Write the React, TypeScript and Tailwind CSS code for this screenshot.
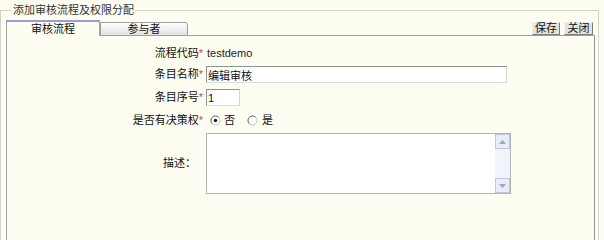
import React from "react";

function Radio({ checked }: { checked?: boolean }) {
  return (
    <svg width="11" height="11" viewBox="0 0 11 11" className="shrink-0">
      <circle cx="5.5" cy="5.5" r="4.5" fill="#ffffff" stroke="#c4c4c4" strokeWidth="1" />
      <path d="M2.3 8.7 A4.5 4.5 0 0 1 8.7 2.3" stroke="#6e6e6e" strokeWidth="1" fill="none" />
      {checked && <circle cx="5.5" cy="5.5" r="1.7" fill="#1a1a1a" />}
    </svg>
  );
}

function Star() {
  return <span className="text-[#e23b3b]">*</span>;
}

function Label({ text, star = true }: { text: string; star?: boolean }) {
  return (
    <div className={`w-[196px] shrink-0 text-right ${star ? "" : "pr-[7px]"}`}>
      {text}
      {star && <Star />}
    </div>
  );
}

const inputCls =
  "h-[17px] bg-white border border-t-[#8a968c] border-l-[#8a968c] border-r-[#d4d6d4] border-b-[#dcdcdc] px-[1px] text-[11px] text-[#111] outline-none leading-[15px]";

export default function App() {
  return (
    <div className="w-[604px] h-[240px] overflow-hidden bg-[#fdfdf1] text-[11px] text-[#111] [font-family:'Liberation_Sans','Noto_Sans_CJK_SC',sans-serif]">
      <fieldset className="mt-[2px] w-[599px] h-[300px] border border-[#d2d2c6] pl-[5px] pr-[3px] pt-[2px]">
        <legend className="ml-[6px] px-[1px] leading-[16px] text-[#333]">添加审核流程及权限分配</legend>
        <div className="flex flex-col">
          {/* tab row */}
          <div className="flex h-[16px] items-end">
            <div className="w-[94px] h-[16px] shrink-0 border-l border-r border-t-2 border-l-[#a4a4a4] border-r-[#a4a4a4] border-t-[#9c9cd4] bg-[#fdfdf1] flex items-center justify-center leading-[14px] text-[#111]">
              审核流程
            </div>
            <div className="w-[88px] h-[14px] shrink-0 border border-[#a0a0a0] rounded-tr-[3px] bg-gradient-to-b from-[#ffffff] to-[#e2e2e2] flex items-center justify-center leading-[12px] text-[#111]">
              参与者
            </div>
            <div className="flex-1 h-[14px] border-b border-[#a0a0a0] flex justify-end items-start gap-[4px] pr-[2px]">
              <button className="w-[28px] h-[13px] border border-t-[#f0f0f0] border-l-[#f0f0f0] border-r-[#7a7a7a] border-b-[#7a7a7a] bg-[#e4e4de] leading-[11px] text-[11px] text-[#111] p-0">
                保存
              </button>
              <button className="w-[29px] h-[13px] border border-t-[#f0f0f0] border-l-[#f0f0f0] border-r-[#7a7a7a] border-b-[#7a7a7a] bg-[#e4e4de] leading-[11px] text-[11px] text-[#111] p-0">
                关闭
              </button>
            </div>
          </div>

          {/* panel */}
          <div className="h-[220px] border-l border-r border-l-[#a4a4a4] border-r-[#949494] bg-[#fdfdf1] pt-[8px] flex flex-col">
            <div className="flex items-center h-[18px]">
              <Label text="流程代码" />
              <div className="ml-[3px] pl-[1px] text-[#222]">testdemo</div>
            </div>
            <div className="flex items-center h-[17px] mt-[4px]">
              <Label text="条目名称" />
              <input className={`${inputCls} ml-[3px] w-[301px]`} defaultValue="编辑审核" />
            </div>
            <div className="flex items-center h-[17px] mt-[6px]">
              <Label text="条目序号" />
              <input className={`${inputCls} ml-[3px] w-[34px]`} defaultValue="1" />
            </div>
            <div className="flex items-center h-[16px] mt-[6px]">
              <Label text="是否有决策权" />
              <div className="ml-[7px] flex items-center">
                <Radio checked />
                <span className="ml-[3px]">否</span>
                <span className="ml-[12px] flex items-center">
                  <Radio />
                </span>
                <span className="ml-[4px]">是</span>
              </div>
            </div>
            <div className="flex items-center h-[61px] mt-[5px]">
              <Label text="描述：" star={false} />
              <div className="ml-[3px] w-[305px] h-[61px] border border-[#b4b4b4] bg-white flex">
                <textarea className="flex-1 resize-none outline-none border-0 bg-white p-[1px] text-[11px]" />
                <div className="w-[15px] shrink-0 bg-[#f1f3fd] flex flex-col justify-between">
                  <div className="h-[15px] border border-[#c2c6dc] bg-[#e9ecf9] flex items-center justify-center">
                    <svg width="7" height="4" viewBox="0 0 7 4">
                      <path d="M0 4 L3.5 0 L7 4 Z" fill="#9ea4bd" />
                    </svg>
                  </div>
                  <div className="h-[15px] border border-[#c2c6dc] bg-[#e9ecf9] flex items-center justify-center">
                    <svg width="7" height="4" viewBox="0 0 7 4">
                      <path d="M0 0 L3.5 4 L7 0 Z" fill="#9ea4bd" />
                    </svg>
                  </div>
                </div>
              </div>
            </div>
          </div>
        </div>
      </fieldset>
    </div>
  );
}
